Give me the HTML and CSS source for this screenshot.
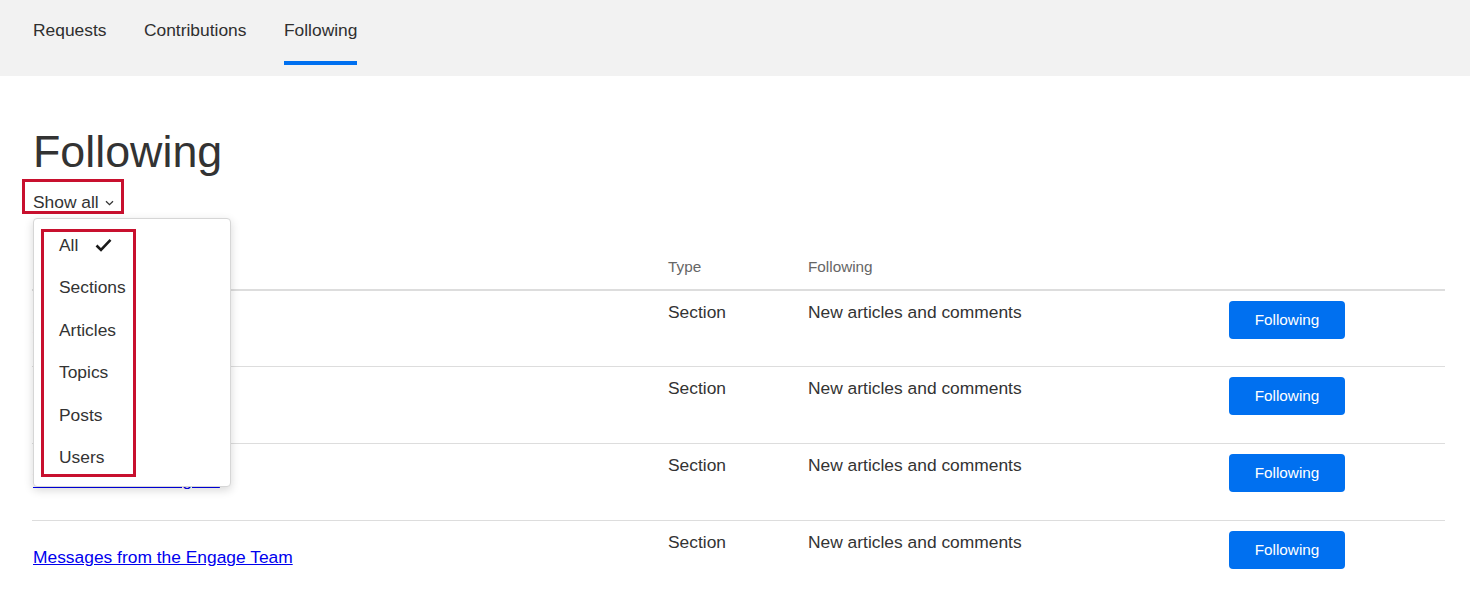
FILE: index.html
```html
<!DOCTYPE html>
<html lang="en">
<head>
    <meta charset="UTF-8">
    <title>Following</title>
    <link rel="stylesheet" href="styles.css">
</head>
<body>
    <nav class="tabs">
        <a class="tab" href="#">Requests</a>
        <a class="tab" href="#">Contributions</a>
        <a class="tab tab-active" href="#">Following</a>
    </nav>
    <main class="content">
        <h1 class="page-title">Following</h1>
        <div class="filter">
            <button class="filter-toggle">Show all
                <svg width="9" height="6" viewBox="0 0 9 6"><path d="M1 1.2 L4.5 4.6 L8 1.2" fill="none" stroke="#333" stroke-width="1.3"/></svg>
            </button>
            <div class="filter-menu">
                <ul class="filter-list">
                    <li>All
                        <svg class="check" width="17" height="14" viewBox="0 0 17 14"><path d="M1.5 7.5 L6 12 L15.5 1.8" fill="none" stroke="#1a1a1a" stroke-width="2.6"/></svg>
                    </li>
                    <li>Sections</li>
                    <li>Articles</li>
                    <li>Topics</li>
                    <li>Posts</li>
                    <li>Users</li>
                </ul>
            </div>
        </div>
        <table class="follow-table">
            <thead>
                <tr>
                    <th class="col-title"></th>
                    <th class="col-type">Type</th>
                    <th class="col-following">Following</th>
                    <th class="col-action"></th>
                </tr>
            </thead>
            <tbody>
                <tr>
                    <td class="cell-title"><a href="#">Announcements</a></td>
                    <td>Section</td>
                    <td>New articles and comments</td>
                    <td class="cell-action"><button class="follow-btn">Following</button></td>
                </tr>
                <tr>
                    <td class="cell-title"><a href="#">General Discussion</a></td>
                    <td>Section</td>
                    <td>New articles and comments</td>
                    <td class="cell-action"><button class="follow-btn">Following</button></td>
                </tr>
                <tr>
                    <td class="cell-title"><a href="#">What We’re Working On</a></td>
                    <td>Section</td>
                    <td>New articles and comments</td>
                    <td class="cell-action"><button class="follow-btn">Following</button></td>
                </tr>
                <tr>
                    <td class="cell-title"><a href="#">Messages from the Engage Team</a></td>
                    <td>Section</td>
                    <td>New articles and comments</td>
                    <td class="cell-action"><button class="follow-btn">Following</button></td>
                </tr>
            </tbody>
        </table>
    </main>
</body>
</html>
```

FILE: styles.css
```css
*{margin: 0;padding: 0;box-sizing: border-box;}
body{font-family: "Liberation Sans", Arial, sans-serif;color: #333;background: #fff;}

.tabs{display: flex;gap: 37.5px;height: 76px;padding: 0 0 0 33px;background: #f2f2f2;}
.tab{display: block;padding-top: 19px;height: 65px;line-height: 22px;font-size: 17.4px;color: #2f2f2f;text-decoration: none;border-bottom: 4px solid transparent;}
.tab-active{border-bottom-color: #0070f0;}

.content{padding: 0 25px 0 32px;}
.page-title{margin-top: 50px;padding-left: 1px;font-size: 44.8px;line-height: 51px;font-weight: normal;color: #333;}

.filter{position: relative;margin-top: 2px;margin-left: -10px;}
.filter-toggle{display: flex;align-items: center;gap: 6px;height: 35px;padding: 10px 7px 0 8px;border: 3px solid #c8102e;background: none;font-family: inherit;font-size: 17.4px;line-height: 20px;color: #333;}
.filter-toggle svg{margin-top: 2px;}

.filter-menu{position: absolute;top: 39px;left: 11px;width: 198px;height: 269px;padding: 10px 0 0 7px;background: #fff;border: 1px solid #d6d6d6;border-radius: 4px;box-shadow: 0 3px 10px rgba(0,0,0,.16);z-index: 2;}
.filter-list{list-style: none;display: flex;flex-direction: column;gap: 16.4px;width: 95px;padding: 0 0 4px 15px;border: 3px solid #c8102e;font-size: 17.4px;}
.filter-list li{line-height: 26px;color: #333;white-space: nowrap;}
.filter-list .check{margin-left: 12px;vertical-align: -1px;}

.follow-table{width: 100%;margin-top: 44px;border-collapse: collapse;}
.follow-table th{padding: 0 11px 13px;text-align: left;font-weight: normal;font-size: 15.3px;line-height: 18px;color: #666;border-bottom: 2px solid #ddd;}
.col-title{width: 625px;}
.col-type{width: 140px;}
.col-following{width: 421px;}
.follow-table tbody tr{height: 76.7px;}
.follow-table td{padding: 11px 11px 0;vertical-align: top;font-size: 17.4px;line-height: 20px;color: #333;border-top: 1px solid #ddd;}
.follow-table td.cell-title{padding: 26px 0 0 1px;}
.cell-title a{color: #0000ee;text-decoration: underline;}
.follow-table td.cell-action{padding-top: 10px;}
.follow-btn{width: 116px;height: 38px;background: #0070f0;border: none;border-radius: 4px;color: #fff;font-family: inherit;font-size: 15.3px;}
```
